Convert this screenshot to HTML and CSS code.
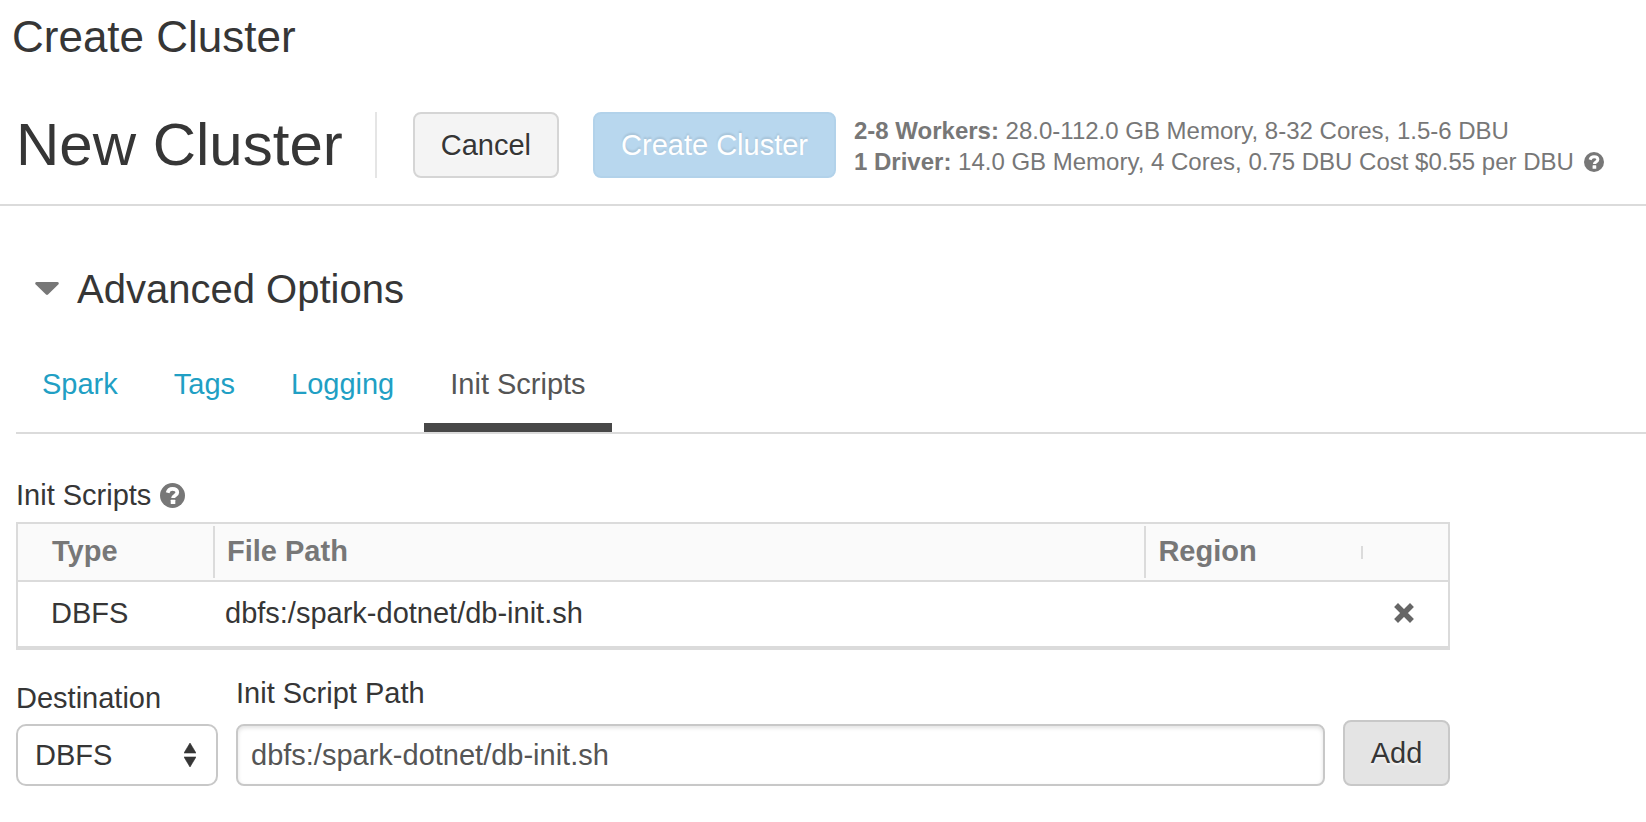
FILE: index.html
```html
<!DOCTYPE html>
<html lang="en">
<head>
<meta charset="utf-8">
<title>Create Cluster</title>
<link rel="stylesheet" href="styles.css">
</head>
<body>
<svg class="sprite" aria-hidden="true">
  <symbol id="help" viewBox="0 0 24 24">
    <circle cx="12" cy="12" r="12" fill="currentColor"/>
    <path d="M7.300 9.300C8 6.800 9.500 5.600 12 5.600c2.700 0 4.600 1.400 4.600 3.500 0 2.900-4.100 2.800-4.100 5.400" fill="none" stroke="#fff" stroke-width="3.600"/>
    <rect x="10.300" y="16" width="4.400" height="4.200" rx="0.500" fill="#fff"/>
  </symbol>
</svg>
<h1 class="page-title">Create Cluster</h1>
<header class="cluster-header">
  <h2 class="cluster-name">New Cluster</h2>
  <button class="btn btn-cancel" type="button">Cancel</button>
  <button class="btn btn-primary" type="button">Create Cluster</button>
  <div class="summary">
    <div><strong>2-8 Workers:</strong> 28.0-112.0 GB Memory, 8-32 Cores, 1.5-6 DBU</div>
    <div class="summary-line"><span><strong>1 Driver:</strong> 14.0 GB Memory, 4 Cores, 0.75 DBU Cost $0.55 per DBU</span><svg class="help-small" role="img" aria-label="Help"><use href="#help"/></svg></div>
  </div>
</header>
<main class="options">
  <h3 class="options-title">
    <button class="toggle" type="button" aria-expanded="true">
      <svg class="caret" viewBox="0 0 24 14" aria-hidden="true"><path d="M1.500 0h21q1.500 0 1.300 1.500q-.1.700-.8 1.300L13 12.600q-1 .9-2 0L1 2.800Q.3 2.200.2 1.500Q0 0 1.500 0z" fill="currentColor"/></svg>
      <span>Advanced Options</span>
    </button>
  </h3>
  <nav class="tabs">
    <a class="tab" href="#spark">Spark</a>
    <a class="tab" href="#tags">Tags</a>
    <a class="tab" href="#logging">Logging</a>
    <a class="tab tab-active" href="#init-scripts" aria-current="page">Init Scripts</a>
  </nav>
  <section class="scripts" id="init-scripts">
    <div class="scripts-label"><span>Init Scripts</span><svg class="help" role="img" aria-label="Help"><use href="#help"/></svg></div>
    <table class="scripts-table">
      <thead>
        <tr>
          <th class="col-type"><div class="head head-first">Type</div></th>
          <th class="col-path"><div class="head">File Path</div></th>
          <th class="col-region"><div class="head">Region</div></th>
          <th class="col-action"><div class="head head-empty"></div></th>
        </tr>
      </thead>
      <tbody>
        <tr>
          <td class="cell-first">DBFS</td>
          <td>dbfs:/spark-dotnet/db-init.sh</td>
          <td></td>
          <td class="cell-action"><button class="remove" type="button" aria-label="Remove"><svg viewBox="0 0 20 20" aria-hidden="true"><path d="M4 4l12 12M16 4l-12 12" stroke="currentColor" stroke-width="5.500" stroke-linecap="square"/><path d="M3.800.8l12.400 12.400" stroke="none" fill="none"/></svg></button></td>
        </tr>
      </tbody>
    </table>
    <form class="script-form">
      <div class="field field-destination">
        <label class="label" for="destination">Destination</label>
        <div class="select-wrap">
          <select class="control select" id="destination"><option>DBFS</option></select>
          <svg class="arrows" viewBox="0 0 12 24" aria-hidden="true"><path d="M6 0l6 10H0zM0 14h12L6 24z" fill="currentColor" stroke="currentColor" stroke-width="0.600" stroke-linejoin="round"/></svg>
        </div>
      </div>
      <div class="field field-path">
        <label class="label label-path" for="path">Init Script Path</label>
        <input class="control input" id="path" type="text" value="dbfs:/spark-dotnet/db-init.sh">
      </div>
      <button class="btn btn-add" type="button">Add</button>
    </form>
  </section>
</main>
</body>
</html>
```
FILE: styles.css
```css
* {
  box-sizing: border-box;
}

body {
  margin: 0;
  background: #fff;
  color: #363636;
  font-family: "Liberation Sans", Arial, sans-serif;
  font-size: 29px;
  line-height: 32px;
}

h1, h2, h3 {
  margin: 0;
  font-weight: 400;
}

button, input, select {
  font: inherit;
  color: inherit;
}

svg {
  flex: none;
}

.sprite {
  display: none;
}

.page-title {
  padding: 12px 12px 0;
  font-size: 44px;
  line-height: 50px;
}

.cluster-header {
  display: flex;
  align-items: center;
  padding: 50px 16px 26px;
  border-bottom: 2px solid #dbdbdb;
}

.cluster-name {
  padding-right: 32px;
  margin-right: 36px;
  border-right: 2px solid #e5e5e5;
  font-size: 60px;
  line-height: 66px;
  white-space: nowrap;
}

.btn {
  flex: none;
  height: 66px;
  padding: 0 26px;
  border: 2px solid #d5d5d5;
  border-radius: 8px;
  text-shadow: 0 2px 2px rgba(255, 255, 255, 0.75);
}

.btn-cancel {
  margin-right: 34px;
  background: #f4f4f4;
}

.btn-primary {
  margin-right: 18px;
  border-color: #b2d2ea;
  background: #b8d7ee;
  color: #fff;
  text-shadow: 0 -2px 2px rgba(0, 0, 0, 0.1);
}

.btn-add {
  border-color: #c8c8c8;
  background: #e4e4e4;
}

.summary {
  padding-top: 2px;
  color: #777;
  font-size: 24px;
  line-height: 31px;
}

.summary-line {
  display: flex;
  align-items: center;
  gap: 10px;
}

.help-small {
  width: 20px;
  height: 20px;
}

.options {
  padding: 60px 0 36px 16px;
}

.options-title {
  font-size: 40px;
  line-height: 46px;
}

.toggle {
  display: flex;
  align-items: center;
  gap: 18px;
  padding: 0 0 0 19px;
  border: 0;
  background: none;
}

.caret {
  width: 24px;
  height: 14px;
  color: #777;
}

.tabs {
  display: flex;
  gap: 4px;
  margin-top: 40px;
  border-bottom: 2px solid #dbdbdb;
}

.tab {
  padding: 16px 26px 23px;
  border-bottom: 9px solid transparent;
  color: #219fc4;
  text-decoration: none;
}

.tab-active {
  border-color: #484848;
  color: #555;
}

.scripts {
  width: 88%;
  padding-top: 45px;
}

.scripts-label {
  display: flex;
  align-items: center;
  gap: 9px;
  padding-bottom: 11px;
}

.help {
  width: 25px;
  height: 25px;
  color: #777;
}

.scripts-table {
  width: 100%;
  table-layout: fixed;
  border: 2px solid #dbdbdb;
  border-bottom-width: 4px;
  border-spacing: 0;
}

.scripts-table th {
  height: 58px;
  padding: 2px 0;
  border-bottom: 2px solid #dbdbdb;
  background: #fafafa;
  color: #777;
  text-align: left;
}

.head {
  padding: 9px 12px 11px;
  border-left: 2px solid #dbdbdb;
}

.head-first {
  padding-left: 34px;
  border-left: 0;
}

.head-empty {
  height: 13px;
  padding: 0;
}

.col-type {
  width: 195px;
}

.col-region {
  width: 217px;
}

.col-action {
  width: 87px;
}

.scripts-table td {
  height: 64px;
  padding: 0 12px 2px;
}

.scripts-table .cell-first {
  padding-left: 33px;
}

.scripts-table .cell-action {
  padding: 0 33px 2px;
}

.remove {
  display: block;
  padding: 0;
  border: 0;
  background: none;
  color: #666;
}

.remove svg {
  display: block;
  width: 20px;
  height: 20px;
}

.script-form {
  display: flex;
  align-items: flex-end;
  gap: 18px;
  margin-top: 27px;
}

.field {
  display: flex;
  flex-direction: column;
}

.field-destination {
  width: 202px;
}

.field-path {
  flex: 1;
}

.label {
  padding-bottom: 10px;
}

.label-path {
  padding-bottom: 15px;
}

.select-wrap {
  position: relative;
}

.control {
  width: 100%;
  height: 62px;
  border: 2px solid #c8c8c8;
  border-radius: 8px;
  background: #fff;
}

.select {
  display: block;
  padding: 0 17px;
  border-radius: 10px;
  appearance: none;
}

.arrows {
  position: absolute;
  top: 19px;
  right: 22px;
  width: 12px;
  height: 24px;
  pointer-events: none;
}

.input {
  padding: 0 13px;
  box-shadow: inset 0 2px 4px rgba(0, 0, 0, 0.12);
  color: #555;
}
```
